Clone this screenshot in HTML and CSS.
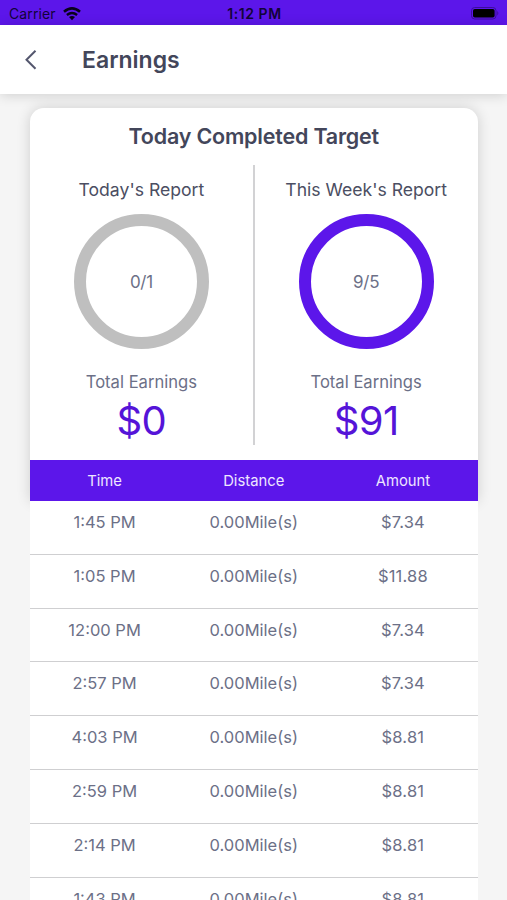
FILE: index.html
```html
<!DOCTYPE html>
<html lang="en">
    <head>
        <meta charset="utf-8">
        <meta name="viewport" content="width=device-width, initial-scale=1">
        <title>Earnings</title>
        <link rel="stylesheet" href="styles.css">
    </head>
    <body>
        <div id="status-bar">
            <div class="carrier">
                <span>Carrier</span>
                <svg width="18" height="14" viewBox="0 0 18 14">
                    <path d="M1 4.8 Q9 -2 17 4.8" fill="none" stroke="#08021a" stroke-width="2.6"/>
                    <path d="M3.9 8 Q9 3.9 14.1 8" fill="none" stroke="#08021a" stroke-width="2.4"/>
                    <path d="M6 10 Q9 7.8 12 10 L9 13.2 Z" fill="#08021a"/>
                </svg>
            </div>
            <span class="clock">1:12 PM</span>
            <div class="battery">
                <svg width="29" height="13" viewBox="0 0 29 13">
                    <rect x="0.5" y="0.5" width="24.5" height="11.5" rx="3.2" fill="none" stroke="#3c0d9c"/>
                    <rect x="2" y="2" width="21.6" height="8.6" rx="1.8" fill="#000"/>
                    <path d="M26.3 4 Q28.4 6.2 26.3 8.5 Z" fill="#3c0d9c"/>
                </svg>
            </div>
        </div><!-- end status-bar -->

        <div id="header">
            <a class="back">
                <svg width="12" height="20" viewBox="0 0 12 20">
                    <path d="M10.5 0.8 L1.5 9.8 L10.5 18.8" fill="none" stroke="#54576e" stroke-width="2"/>
                </svg>
            </a>
            <h1>Earnings</h1>
        </div><!-- end header -->

        <div id="content">
            <div id="summary">
                <h2>Today Completed Target</h2>
                <div class="reports">
                    <div class="report">
                        <h3>Today's Report</h3>
                        <div class="ring">0/1</div>
                        <p class="label">Total Earnings</p>
                        <p class="total">$0</p>
                    </div>
                    <div class="divider"></div>
                    <div class="report">
                        <h3>This Week's Report</h3>
                        <div class="ring full">9/5</div>
                        <p class="label">Total Earnings</p>
                        <p class="total">$91</p>
                    </div>
                </div>
                <div class="table-head">
                    <span>Time</span>
                    <span>Distance</span>
                    <span>Amount</span>
                </div>
            </div><!-- end summary -->

            <ul id="trips">
                <li><span>1:45 PM</span><span>0.00Mile(s)</span><span class="amount">$7.34</span></li>
                <li><span>1:05 PM</span><span>0.00Mile(s)</span><span class="amount">$11.88</span></li>
                <li><span>12:00 PM</span><span>0.00Mile(s)</span><span class="amount">$7.34</span></li>
                <li><span>2:57 PM</span><span>0.00Mile(s)</span><span class="amount">$7.34</span></li>
                <li><span>4:03 PM</span><span>0.00Mile(s)</span><span class="amount">$8.81</span></li>
                <li><span>2:59 PM</span><span>0.00Mile(s)</span><span class="amount">$8.81</span></li>
                <li><span>2:14 PM</span><span>0.00Mile(s)</span><span class="amount">$8.81</span></li>
                <li><span>1:43 PM</span><span>0.00Mile(s)</span><span class="amount">$8.81</span></li>
            </ul>
        </div><!-- end content -->
    </body>
</html>
```
FILE: styles.css
```css
*{
    box-sizing: border-box;
    margin: 0;
    padding: 0;
}

body{
    display: flex;
    flex-direction: column;
    height: 100vh;
    overflow: hidden;
    background-color: #f5f5f5;
    color: #6c7087;
    font-family: Inter, "Liberation Sans", sans-serif;
    font-weight: 400;
}

svg{
    display: block;
}

/* status bar */
#status-bar{
    display: grid;
    grid-template-columns: 1fr auto 1fr;
    align-items: center;
    flex: none;
    height: 25px;
    padding: 2px 7px 0 9px;
    background-color: #5c16ea;
    color: #12043a;
    font-size: 14px;
    line-height: 20px;
}

.carrier{
    display: flex;
    align-items: center;
    gap: 7px;
    letter-spacing: .1px;
}

.clock{
    font-size: 14px;
    font-weight: 600;
    letter-spacing: .55px;
}

.battery{
    justify-self: end;
}

/* header */
#header{
    display: flex;
    align-items: center;
    flex: none;
    height: 69px;
    padding-left: 25px;
    background-color: #fff;
    box-shadow: 0 1px 12px rgba(0, 0, 0, .16);
}

.back{
    width: 57px;
}

#header h1{
    color: #43465a;
    font-size: 23px;
    font-weight: 600;
    line-height: 30px;
}

/* card */
#content{
    flex: 1;
    min-height: 0;
    padding: 14px 29.5px 0 30px;
    overflow: hidden;
}

#summary{
    height: 393px;
    border-radius: 14px 14px 0 0;
    background-color: #fff;
    box-shadow: 0 0 14px rgba(0, 0, 0, .16);
    text-align: center;
}

#summary h2{
    height: 57px;
    padding-top: 13px;
    color: #43465a;
    font-size: 21.5px;
    font-weight: 600;
    letter-spacing: -.2px;
    line-height: 30px;
}

.reports{
    display: flex;
    height: 295px;
}

.report{
    flex: 1;
    display: flex;
    flex-direction: column;
    align-items: center;
    padding-top: 13px;
}

.report h3{
    color: #4b4e62;
    font-size: 17.6px;
    font-weight: 400;
    line-height: 24px;
}

.divider{
    width: 2px;
    height: 280px;
    background-color: #d2d2d4;
}

.ring{
    display: flex;
    align-items: center;
    justify-content: center;
    width: 135px;
    height: 135px;
    margin-top: 12px;
    border: 12px solid #bfbfbf;
    border-radius: 50%;
    font-size: 17px;
    letter-spacing: -.3px;
}

.ring.full{
    border-color: #5c16ea;
}

.label{
    margin-top: 21px;
    font-size: 16.6px;
    line-height: 24px;
}

.total{
    margin-top: 3px;
    color: #5514d8;
    font-size: 40px;
    letter-spacing: -.6px;
    line-height: 48px;
}

.table-head, #trips li{
    display: grid;
    grid-template-columns: repeat(3, 1fr);
    text-align: center;
}

.table-head{
    height: 41px;
    background-color: #5c16ea;
    color: #eee6ff;
    font-size: 14.8px;
    line-height: 43px;
}

/* trips list */
#trips{
    position: relative;
    background-color: #fff;
    list-style: none;
}

#trips li{
    height: 53.8px;
    padding-top: 9px;
    border-bottom: 1px solid #cfcfd1;
    font-size: 16.5px;
    line-height: 24px;
}

#trips .amount{
    letter-spacing: .2px;
}
```
